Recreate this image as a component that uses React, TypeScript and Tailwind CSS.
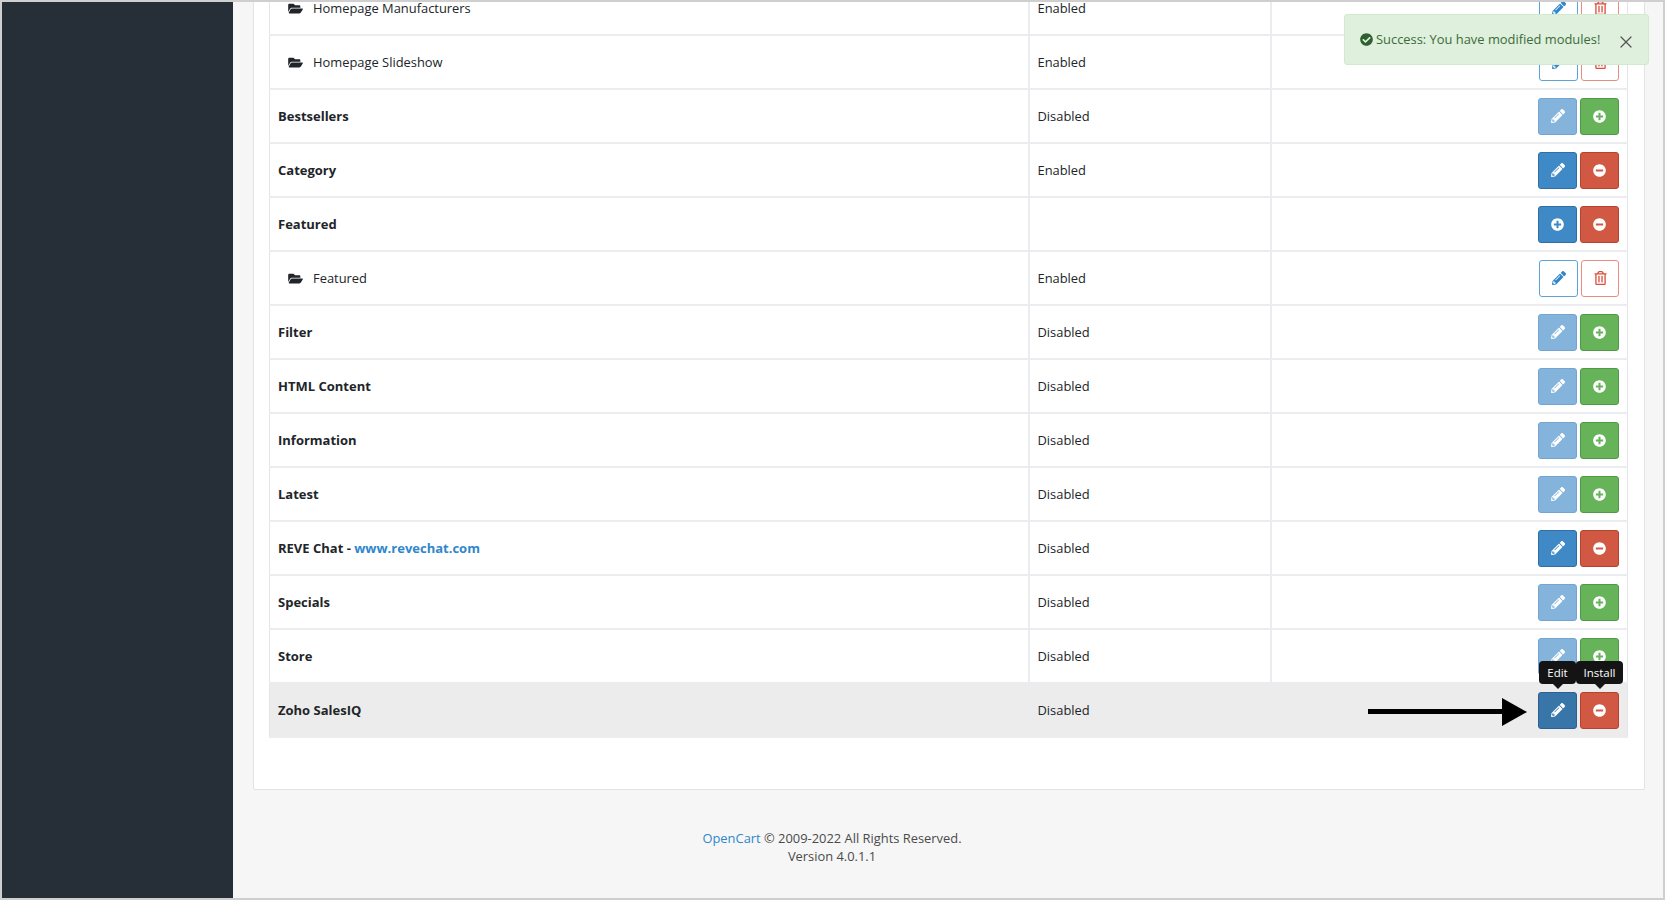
import { FaCheckCircle, FaFolderOpen, FaMinusCircle, FaPencilAlt, FaPlusCircle, FaRegTrashAlt } from 'react-icons/fa'
import { X } from 'lucide-react'

type Tone = 'edit' | 'editOff' | 'editHover' | 'add' | 'addBlue' | 'remove' | 'outlineEdit' | 'outlineTrash'

const toneClass: Record<Tone, string> = {
  edit: 'w-[39px] border bg-[#3f8ac6] border-[#2f6fa5] text-white',
  editOff: 'w-[39px] border bg-[#84b4dc] border-[#73a5d0] text-white',
  editHover: 'w-[39px] border bg-[#3875a8] border-[#2d618e] text-white',
  add: 'w-[39px] border bg-[#66b35a] border-[#4f9a46] text-white',
  addBlue: 'w-[39px] border bg-[#3f8ac6] border-[#2f6fa5] text-white',
  remove: 'w-[39px] border bg-[#d15842] border-[#b9422e] text-white',
  outlineEdit: 'w-[39px] border-[1.5px] bg-white border-[#5ba4da] text-[#2f86cb]',
  outlineTrash: 'w-[38px] border-[1.5px] bg-white border-[#e88e80] text-[#d9503c]',
}

function ActionButton({ tone }: { tone: Tone }) {
  return (
    <span className={`flex h-[37px] items-center justify-center rounded-[3px] ${toneClass[tone]}`}>
      {(tone === 'edit' || tone === 'editOff' || tone === 'editHover' || tone === 'outlineEdit') && <FaPencilAlt className="h-[14px] w-[14px]" />}
      {(tone === 'add' || tone === 'addBlue') && <FaPlusCircle className="h-[13px] w-[13px]" />}
      {tone === 'remove' && <FaMinusCircle className="h-[13px] w-[13px]" />}
      {tone === 'outlineTrash' && <FaRegTrashAlt className="h-[14px] w-[13px]" />}
    </span>
  )
}

interface ModuleRow {
  name: string
  status: string
  child?: boolean
  actions: [Tone, Tone]
}

const rows: ModuleRow[] = [
  { name: 'Homepage Manufacturers', status: 'Enabled', child: true, actions: ['outlineEdit', 'outlineTrash'] },
  { name: 'Homepage Slideshow', status: 'Enabled', child: true, actions: ['outlineEdit', 'outlineTrash'] },
  { name: 'Bestsellers', status: 'Disabled', actions: ['editOff', 'add'] },
  { name: 'Category', status: 'Enabled', actions: ['edit', 'remove'] },
  { name: 'Featured', status: '', actions: ['addBlue', 'remove'] },
  { name: 'Featured', status: 'Enabled', child: true, actions: ['outlineEdit', 'outlineTrash'] },
  { name: 'Filter', status: 'Disabled', actions: ['editOff', 'add'] },
  { name: 'HTML Content', status: 'Disabled', actions: ['editOff', 'add'] },
  { name: 'Information', status: 'Disabled', actions: ['editOff', 'add'] },
  { name: 'Latest', status: 'Disabled', actions: ['editOff', 'add'] },
  { name: 'REVE Chat', status: 'Disabled', actions: ['edit', 'remove'] },
  { name: 'Specials', status: 'Disabled', actions: ['editOff', 'add'] },
  { name: 'Store', status: 'Disabled', actions: ['editOff', 'add'] },
  { name: 'Zoho SalesIQ', status: 'Disabled', actions: ['editHover', 'remove'] },
]

function Tooltip({ label, className }: { label: string; className: string }) {
  return (
    <span className={`absolute top-[-23px] flex h-[23px] items-center justify-center rounded-[4px] bg-[#141414] text-[11.5px] text-white ${className}`}>
      {label}
      <span className="absolute bottom-[-5px] left-1/2 -ml-[5px] h-0 w-0 border-x-[5px] border-t-[5px] border-x-transparent border-t-[#141414]" />
    </span>
  )
}

export default function App() {
  return (
    <div className="relative flex h-[900px] overflow-hidden border-2 border-[#cfcfcf] font-['Open_Sans',sans-serif] text-[12.9px] text-[#212529]">
      {/* Sidebar */}
      <aside className="w-[231px] shrink-0 bg-[#262e38]" />

      {/* Content */}
      <main className="flex-1 bg-[#f6f6f6] pl-[20px] pr-[18px]">
        <div className="-mt-[22px] rounded-b-[2px] border border-[#e3e3e3] bg-white px-[15px] pb-[51px]">
          <table className="w-[1358px] table-fixed border-collapse border-x border-b border-[#e4e5ea]">
            <colgroup>
              <col className="w-[759px]" />
              <col className="w-[242px]" />
              <col className="w-[357px]" />
            </colgroup>
            <tbody>
              {rows.map((row, i) => {
                const isLast = i === rows.length - 1
                return (
                  <tr key={i} className={`h-[54px] border-b-2 border-[#ebecf0] ${isLast ? 'bg-[#ececec]' : ''}`}>
                    <td className="px-[8px] pt-[2px]">
                      {row.child ? (
                        <span className="flex items-center pl-[10px]">
                          <FaFolderOpen className="mr-[10px] h-[13px] w-[15px] text-[#212529]" />
                          {row.name}
                        </span>
                      ) : (
                        <span className="text-[13px] font-bold">
                          {row.name}
                          {row.name === 'REVE Chat' && (
                            <>
                              {' - '}
                              <span className="text-[#2f86cb]">www.revechat.com</span>
                            </>
                          )}
                        </span>
                      )}
                    </td>
                    <td className="border-x-2 border-[#ebecf0] px-[8px] pt-[2px]">{row.status}</td>
                    <td className="relative pr-[8px]">
                      <div className="flex justify-end gap-[3px]">
                        <ActionButton tone={row.actions[0]} />
                        <ActionButton tone={row.actions[1]} />
                      </div>
                      {isLast && (
                        <>
                          <Tooltip label="Edit" className="right-[51px] w-[37px]" />
                          <Tooltip label="Install" className="right-[4px] w-[47px]" />
                          <svg className="absolute left-[96px] top-[14px]" width="160" height="30" viewBox="0 0 160 30">
                            <rect x="0" y="11" width="135" height="5" fill="#000" />
                            <path d="M134 0 L159 14 L134 28 Z" fill="#000" />
                          </svg>
                        </>
                      )}
                    </td>
                  </tr>
                )
              })}
            </tbody>
          </table>
        </div>

        <footer className="pr-[234px] pt-[39px] text-center leading-[18px] text-[#4a4a4a]">
          <p>
            <span className="text-[#2f86cb]">OpenCart</span> © 2009-2022 All Rights Reserved.
          </p>
          <p>Version 4.0.1.1</p>
        </footer>
      </main>

      {/* Toast */}
      <div className="absolute left-[1342px] top-[12px] flex h-[51px] w-[305px] items-center rounded-[3px] border border-[#d3e9cf] bg-[#dff0dd] pl-[15px] text-[#3c6b3a]">
        <FaCheckCircle className="mr-[3px] h-[13px] w-[13px] text-[#2f6030]" />
        <span>Success: You have modified modules!</span>
        <X className="absolute right-[12px] top-[17px] h-[20px] w-[20px] text-[#555]" strokeWidth={1.5} />
      </div>
    </div>
  )
}
